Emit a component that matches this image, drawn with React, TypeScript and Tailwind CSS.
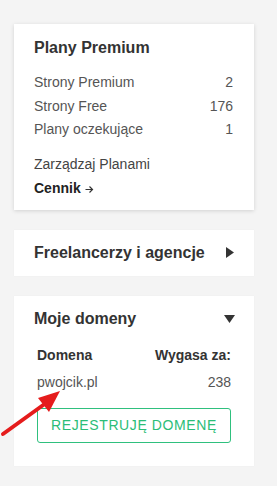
import React from "react";

const rows = [
  { label: "Strony Premium", value: "2" },
  { label: "Strony Free", value: "176" },
  { label: "Plany oczekujące", value: "1" },
];

export default function App() {
  return (
    <div
      className="relative min-h-[486px] w-[277px] bg-[#f4f4f4] px-[14px] pt-[24px] pb-[20px] text-[#555]"
      style={{ fontFamily: '"Liberation Sans", Arial, sans-serif' }}
    >
      <div className="flex w-[240px] flex-col gap-[20px]">
        <div className="bg-white px-[20px] pt-[14px] pb-[9px] shadow-[0_1px_4px_rgba(0,0,0,0.14)]">
          <h2 className="text-[16px] font-bold leading-[20px] text-[#333]">Plany Premium</h2>
          <div className="mt-[13px] flex flex-col pr-[1px]">
            {rows.map((r) => (
              <div key={r.label} className="flex h-[23.5px] items-center justify-between text-[14px]">
                <span>{r.label}</span>
                <span>{r.value}</span>
              </div>
            ))}
          </div>
          <div className="mt-[11px] flex h-[24px] items-center text-[14px] text-[#444]">Zarządzaj Planami</div>
          <div className="flex h-[24px] items-center gap-[4px] text-[14px] font-bold text-[#222]">
            Cennik
            <svg width="9" height="9" viewBox="0 0 9 9" className="mt-[1px]">
              <path d="M0.5 4.5h7M4.5 1.5l3 3-3 3" fill="none" stroke="#333" strokeWidth="1.2" />
            </svg>
          </div>
        </div>

        <div className="flex h-[46px] items-center justify-between bg-white pr-[20px] pl-[20px] shadow-[0_0_1px_rgba(0,0,0,0.06)]">
          <span className="text-[16px] font-bold text-[#333]">Freelancerzy i agencje</span>
          <svg width="8" height="11" viewBox="0 0 8 11">
            <path d="M0 0l8 5.5-8 5.5z" fill="#333" />
          </svg>
        </div>

        <div className="bg-white px-[20px] pt-[13px] pb-[23px] shadow-[0_0_1px_rgba(0,0,0,0.06)]">
          <div className="flex h-[20px] items-center justify-between">
            <span className="text-[16px] font-bold text-[#333]">Moje domeny</span>
            <svg width="11" height="8" viewBox="0 0 11 8" className="mr-[-1px]">
              <path d="M0 0h11l-5.5 8z" fill="#333" />
            </svg>
          </div>
          <div className="mt-[17px] px-[3px]">
            <div className="flex h-[20px] items-center justify-between text-[14px] font-bold text-[#333]">
              <span>Domena</span>
              <span>Wygasa za:</span>
            </div>
            <div className="mt-[7px] flex h-[20px] items-center justify-between text-[14px] text-[#555]">
              <span>pwojcik.pl</span>
              <span>238</span>
            </div>
            <button
              type="button"
              className="mt-[15px] flex h-[35px] w-[194px] items-center justify-center rounded-[3px] border border-[#2fc07e] text-[14px] tracking-[0.6px] text-[#2bbd77]"
            >
              REJESTRUJĘ DOMENĘ
            </button>
          </div>
        </div>
      </div>

      <svg className="pointer-events-none absolute left-0 top-0" width="277" height="486" viewBox="0 0 277 486">
        <line x1="3" y1="434" x2="46" y2="403" stroke="#e51c1c" strokeWidth="4" strokeLinecap="round" />
        <path d="M60 391L38 398L49 412Z" fill="#e51c1c" />
      </svg>
    </div>
  );
}
